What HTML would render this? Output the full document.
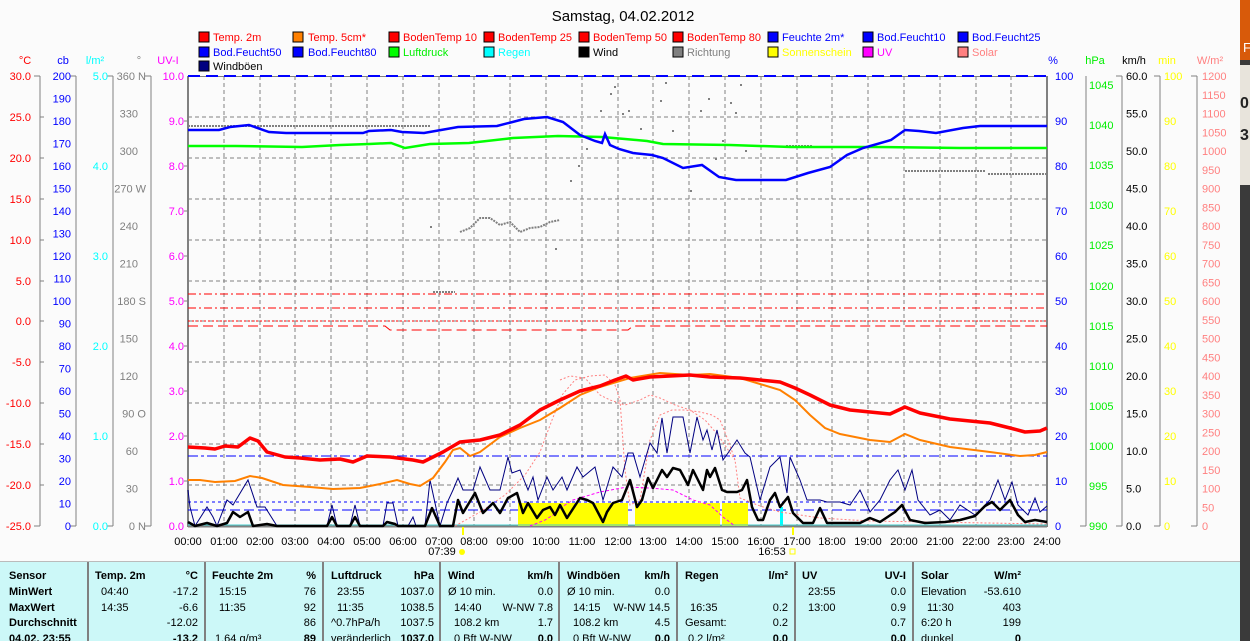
<!DOCTYPE html>
<html><head><meta charset="utf-8"><style>
body{margin:0;background:#fbfbfb;width:1250px;height:641px;overflow:hidden}
svg{display:block;font-family:"Liberation Sans",Arial,sans-serif;font-size:11px}
.b{font-weight:bold}
</style></head><body>
<svg width="1250" height="641" viewBox="0 0 1250 641">
<rect x="0" y="0" width="1250" height="641" fill="#fbfbfb"/>
<!-- right strip -->
<rect x="1240" y="0" width="10" height="641" fill="#3a3a3a"/>
<rect x="1240" y="0" width="10" height="60" fill="#d85a0a"/>
<text x="1243" y="52" fill="#fff" font-size="13">F</text>
<rect x="1240" y="65" width="10" height="120" fill="#e8e4dc"/>
<text x="1240" y="108" fill="#222" font-size="16" font-weight="bold">0</text>
<text x="1240" y="140" fill="#222" font-size="16" font-weight="bold">3</text>
<!-- title -->
<text x="623" y="21" text-anchor="middle" font-size="15" fill="#000">Samstag, 04.02.2012</text>
<!-- legend -->
<g>
<rect x="199" y="32" width="10" height="10" fill="#f00" stroke="#000"/><text x="213" y="41" fill="#f00">Temp. 2m</text>
<rect x="293" y="32" width="10" height="10" fill="#ff8000" stroke="#000"/><text x="308" y="41" fill="#f00">Temp. 5cm*</text>
<rect x="389" y="32" width="10" height="10" fill="#f00" stroke="#000"/><text x="403" y="41" fill="#f00">BodenTemp 10</text>
<rect x="484" y="32" width="10" height="10" fill="#f00" stroke="#000"/><text x="498" y="41" fill="#f00">BodenTemp 25</text>
<rect x="579" y="32" width="10" height="10" fill="#f00" stroke="#000"/><text x="593" y="41" fill="#f00">BodenTemp 50</text>
<rect x="673" y="32" width="10" height="10" fill="#f00" stroke="#000"/><text x="687" y="41" fill="#f00">BodenTemp 80</text>
<rect x="768" y="32" width="10" height="10" fill="#00f" stroke="#000"/><text x="782" y="41" fill="#00f">Feuchte 2m*</text>
<rect x="863" y="32" width="10" height="10" fill="#00f" stroke="#000"/><text x="877" y="41" fill="#00f">Bod.Feucht10</text>
<rect x="958" y="32" width="10" height="10" fill="#00f" stroke="#000"/><text x="972" y="41" fill="#00f">Bod.Feucht25</text>
<rect x="199" y="47" width="10" height="10" fill="#00f" stroke="#000"/><text x="213" y="56" fill="#00f">Bod.Feucht50</text>
<rect x="293" y="47" width="10" height="10" fill="#00f" stroke="#000"/><text x="308" y="56" fill="#00f">Bod.Feucht80</text>
<rect x="389" y="47" width="10" height="10" fill="#0f0" stroke="#000"/><text x="403" y="56" fill="#0e0">Luftdruck</text>
<rect x="484" y="47" width="10" height="10" fill="#0ff" stroke="#000"/><text x="498" y="56" fill="#0ff">Regen</text>
<rect x="579" y="47" width="10" height="10" fill="#000" stroke="#000"/><text x="593" y="56" fill="#000">Wind</text>
<rect x="673" y="47" width="10" height="10" fill="#808080" stroke="#000"/><text x="687" y="56" fill="#808080">Richtung</text>
<rect x="768" y="47" width="10" height="10" fill="#ff0" stroke="#000"/><text x="782" y="56" fill="#ff0">Sonnenschein</text>
<rect x="863" y="47" width="10" height="10" fill="#f0f" stroke="#000"/><text x="877" y="56" fill="#f0f">UV</text>
<rect x="958" y="47" width="10" height="10" fill="#ff8080" stroke="#000"/><text x="972" y="56" fill="#ff8080">Solar</text>
<rect x="199" y="61" width="10" height="10" fill="#000080" stroke="#000"/><text x="213" y="70" fill="#000">Windböen</text>
</g>
<!-- axis units -->
<text x="25" y="64" text-anchor="middle" fill="#f00">°C</text>
<text x="63" y="64" text-anchor="middle" fill="#00f">cb</text>
<text x="95" y="64" text-anchor="middle" fill="#0ff">l/m²</text>
<text x="139" y="64" text-anchor="middle" fill="#808080">°</text>
<text x="168" y="64" text-anchor="middle" fill="#f0f">UV-I</text>
<text x="1053" y="64" text-anchor="middle" fill="#00f">%</text>
<text x="1095" y="64" text-anchor="middle" fill="#0e0">hPa</text>
<text x="1134" y="64" text-anchor="middle" fill="#000">km/h</text>
<text x="1167" y="64" text-anchor="middle" fill="#ff0">min</text>
<text x="1210" y="64" text-anchor="middle" fill="#ff8080">W/m²</text>
<!-- axis lines -->
<g stroke="#808080" stroke-width="1">
<line x1="40" y1="76" x2="40" y2="526"/><line x1="76" y1="76" x2="76" y2="526"/><line x1="113" y1="76" x2="113" y2="526"/><line x1="151" y1="76" x2="151" y2="526"/>
<line x1="1086" y1="76" x2="1086" y2="526"/><line x1="1122" y1="76" x2="1122" y2="526"/><line x1="1160" y1="76" x2="1160" y2="526"/><line x1="1197" y1="76" x2="1197" y2="526"/>
<line x1="34" y1="526" x2="40" y2="526"/><line x1="70" y1="526" x2="76" y2="526"/><line x1="107" y1="526" x2="113" y2="526"/><line x1="145" y1="526" x2="151" y2="526"/>
<line x1="1080" y1="526" x2="1086" y2="526"/><line x1="1116" y1="526" x2="1122" y2="526"/><line x1="1154" y1="526" x2="1160" y2="526"/><line x1="1191" y1="526" x2="1197" y2="526"/>
<line x1="1116" y1="76" x2="1122" y2="76"/><line x1="1154" y1="76" x2="1160" y2="76"/><line x1="1191" y1="76" x2="1197" y2="76"/><line x1="34" y1="76" x2="40" y2="76"/><line x1="70" y1="76" x2="76" y2="76"/><line x1="107" y1="76" x2="113" y2="76"/><line x1="145" y1="76" x2="151" y2="76"/>
</g>
<!-- °C labels -->
<g fill="#f00" text-anchor="end">
<text x="31" y="80">30.0</text><text x="31" y="121">25.0</text><text x="31" y="162">20.0</text><text x="31" y="203">15.0</text><text x="31" y="244">10.0</text><text x="31" y="285">5.0</text><text x="31" y="325">0.0</text><text x="31" y="366">-5.0</text><text x="31" y="407">-10.0</text><text x="31" y="448">-15.0</text><text x="31" y="489">-20.0</text><text x="31" y="530">-25.0</text>
</g>
<g stroke="#808080"><line x1="40" y1="117" x2="44" y2="117"/><line x1="40" y1="158" x2="44" y2="158"/><line x1="40" y1="199" x2="44" y2="199"/><line x1="40" y1="240" x2="44" y2="240"/><line x1="40" y1="281" x2="44" y2="281"/><line x1="40" y1="321" x2="44" y2="321"/><line x1="40" y1="362" x2="44" y2="362"/><line x1="40" y1="403" x2="44" y2="403"/><line x1="40" y1="444" x2="44" y2="444"/><line x1="40" y1="485" x2="44" y2="485"/></g>
<!-- cb labels -->
<g fill="#00f" text-anchor="end">
<text x="71" y="80">200</text><text x="71" y="102.5">190</text><text x="71" y="125">180</text><text x="71" y="147.5">170</text><text x="71" y="170">160</text><text x="71" y="192.5">150</text><text x="71" y="215">140</text><text x="71" y="237.5">130</text><text x="71" y="260">120</text><text x="71" y="282.5">110</text><text x="71" y="305">100</text><text x="71" y="327.5">90</text><text x="71" y="350">80</text><text x="71" y="372.5">70</text><text x="71" y="395">60</text><text x="71" y="417.5">50</text><text x="71" y="440">40</text><text x="71" y="462.5">30</text><text x="71" y="485">20</text><text x="71" y="507.5">10</text><text x="71" y="530">0</text>
</g>
<!-- l/m2 -->
<g fill="#0ff" text-anchor="end">
<text x="108" y="80">5.0</text><text x="108" y="170">4.0</text><text x="108" y="260">3.0</text><text x="108" y="350">2.0</text><text x="108" y="440">1.0</text><text x="108" y="530">0.0</text>
</g>
<!-- degrees -->
<g fill="#808080" text-anchor="end">
<text x="146" y="80">360 N</text><text x="138" y="117.5">330</text><text x="138" y="155">300</text><text x="146" y="192.5">270 W</text><text x="138" y="230">240</text><text x="138" y="267.5">210</text><text x="146" y="305">180 S</text><text x="138" y="342.5">150</text><text x="138" y="380">120</text><text x="146" y="417.5">90  O</text><text x="138" y="455">60</text><text x="138" y="492.5">30</text><text x="146" y="530">0   N</text>
</g>
<!-- UV-I -->
<g fill="#f0f" text-anchor="end">
<text x="184" y="80">10.0</text><text x="184" y="125">9.0</text><text x="184" y="170">8.0</text><text x="184" y="215">7.0</text><text x="184" y="260">6.0</text><text x="184" y="305">5.0</text><text x="184" y="350">4.0</text><text x="184" y="395">3.0</text><text x="184" y="440">2.0</text><text x="184" y="485">1.0</text><text x="184" y="530">0.0</text>
</g>
<!-- % -->
<g fill="#00f">
<text x="1055" y="80">100</text><text x="1055" y="125">90</text><text x="1055" y="170">80</text><text x="1055" y="215">70</text><text x="1055" y="260">60</text><text x="1055" y="305">50</text><text x="1055" y="350">40</text><text x="1055" y="395">30</text><text x="1055" y="440">20</text><text x="1055" y="485">10</text><text x="1055" y="530">0</text>
</g>
<!-- hPa -->
<g fill="#0e0">
<text x="1089" y="89">1045</text><text x="1089" y="129">1040</text><text x="1089" y="169">1035</text><text x="1089" y="209">1030</text><text x="1089" y="249">1025</text><text x="1089" y="290">1020</text><text x="1089" y="330">1015</text><text x="1089" y="370">1010</text><text x="1089" y="410">1005</text><text x="1089" y="450">1000</text><text x="1089" y="490">995</text><text x="1089" y="530">990</text>
</g>
<!-- km/h -->
<g fill="#000">
<text x="1126" y="80">60.0</text><text x="1126" y="117.5">55.0</text><text x="1126" y="155">50.0</text><text x="1126" y="192.5">45.0</text><text x="1126" y="230">40.0</text><text x="1126" y="267.5">35.0</text><text x="1126" y="305">30.0</text><text x="1126" y="342.5">25.0</text><text x="1126" y="380">20.0</text><text x="1126" y="417.5">15.0</text><text x="1126" y="455">10.0</text><text x="1126" y="492.5">5.0</text><text x="1126" y="530">0.0</text>
</g>
<!-- min -->
<g fill="#ff0">
<text x="1164" y="80">100</text><text x="1164" y="125">90</text><text x="1164" y="170">80</text><text x="1164" y="215">70</text><text x="1164" y="260">60</text><text x="1164" y="305">50</text><text x="1164" y="350">40</text><text x="1164" y="395">30</text><text x="1164" y="440">20</text><text x="1164" y="485">10</text><text x="1164" y="530">0</text>
</g>
<!-- W/m2 -->
<g fill="#ff8080">
<text x="1202" y="80">1200</text><text x="1202" y="98.8">1150</text><text x="1202" y="117.5">1100</text><text x="1202" y="136.3">1050</text><text x="1202" y="155">1000</text><text x="1202" y="173.8">950</text><text x="1202" y="192.5">900</text><text x="1202" y="211.3">850</text><text x="1202" y="230">800</text><text x="1202" y="248.8">750</text><text x="1202" y="267.5">700</text><text x="1202" y="286.3">650</text><text x="1202" y="305">600</text><text x="1202" y="323.8">550</text><text x="1202" y="342.5">500</text><text x="1202" y="361.3">450</text><text x="1202" y="380">400</text><text x="1202" y="398.8">350</text><text x="1202" y="417.5">300</text><text x="1202" y="436.3">250</text><text x="1202" y="455">200</text><text x="1202" y="473.8">150</text><text x="1202" y="492.5">100</text><text x="1202" y="511.3">50</text><text x="1202" y="530">0</text>
</g>
<!-- plot frame & grid -->
<g stroke="#808080" stroke-width="1" stroke-dasharray="4,3">
<line x1="224" y1="76" x2="224" y2="526"/><line x1="260" y1="76" x2="260" y2="526"/><line x1="295" y1="76" x2="295" y2="526"/><line x1="331" y1="76" x2="331" y2="526"/><line x1="367" y1="76" x2="367" y2="526"/><line x1="403" y1="76" x2="403" y2="526"/><line x1="439" y1="76" x2="439" y2="526"/><line x1="474" y1="76" x2="474" y2="526"/><line x1="510" y1="76" x2="510" y2="526"/><line x1="546" y1="76" x2="546" y2="526"/><line x1="582" y1="76" x2="582" y2="526"/><line x1="618" y1="76" x2="618" y2="526"/><line x1="653" y1="76" x2="653" y2="526"/><line x1="689" y1="76" x2="689" y2="526"/><line x1="725" y1="76" x2="725" y2="526"/><line x1="761" y1="76" x2="761" y2="526"/><line x1="797" y1="76" x2="797" y2="526"/><line x1="832" y1="76" x2="832" y2="526"/><line x1="868" y1="76" x2="868" y2="526"/><line x1="904" y1="76" x2="904" y2="526"/><line x1="940" y1="76" x2="940" y2="526"/><line x1="976" y1="76" x2="976" y2="526"/><line x1="1011" y1="76" x2="1011" y2="526"/>
<line x1="188" y1="117" x2="1047" y2="117"/><line x1="188" y1="158" x2="1047" y2="158"/><line x1="188" y1="199" x2="1047" y2="199"/><line x1="188" y1="240" x2="1047" y2="240"/><line x1="188" y1="281" x2="1047" y2="281"/><line x1="188" y1="321" x2="1047" y2="321"/><line x1="188" y1="362" x2="1047" y2="362"/><line x1="188" y1="403" x2="1047" y2="403"/><line x1="188" y1="444" x2="1047" y2="444"/><line x1="188" y1="485" x2="1047" y2="485"/>
</g>
<g stroke="#808080" stroke-width="2"><line x1="188" y1="76" x2="188" y2="527"/><line x1="1047" y1="76" x2="1047" y2="527"/><line x1="188" y1="526.5" x2="1047" y2="526.5"/></g>
<line x1="188" y1="76.5" x2="1047" y2="76.5" stroke="#808080"/>
<!-- axis ticks small -->
<g stroke="#808080"><line x1="184" y1="121" x2="188" y2="121"/><line x1="184" y1="166" x2="188" y2="166"/><line x1="184" y1="211" x2="188" y2="211"/><line x1="184" y1="256" x2="188" y2="256"/><line x1="184" y1="301" x2="188" y2="301"/><line x1="184" y1="346" x2="188" y2="346"/><line x1="184" y1="391" x2="188" y2="391"/><line x1="184" y1="436" x2="188" y2="436"/><line x1="184" y1="481" x2="188" y2="481"/></g>
<!-- blue dashed top -->
<line x1="188" y1="76" x2="1047" y2="76" stroke="#00f" stroke-width="2" stroke-dasharray="12,6"/>
<!-- red dashed soil temps -->
<g stroke="#f00" stroke-width="1">
<line x1="188" y1="294" x2="1047" y2="294" stroke-dasharray="8,3,2,3"/>
<line x1="188" y1="308" x2="1047" y2="308" stroke-dasharray="8,3,2,3"/>
<line x1="188" y1="321" x2="1047" y2="321" stroke-dasharray="2,2"/>
<polyline fill="none" stroke-dasharray="10,5" points="188,326 385,326 390,330 628,330 633,326 1047,326"/>
</g>
<!-- blue dashed lower -->
<line x1="188" y1="456" x2="1047" y2="456" stroke="#00f" stroke-dasharray="10,3,3,3"/>
<line x1="188" y1="502" x2="1047" y2="502" stroke="#00f" stroke-dasharray="3,3"/>
<line x1="188" y1="510" x2="1047" y2="510" stroke="#00f" stroke-dasharray="10,4"/>
<!-- sunshine -->
<g fill="#ff0"><rect x="518" y="503" width="110" height="23"/><rect x="635" y="503" width="85" height="23"/><rect x="722" y="503" width="26" height="23"/></g>
<rect x="780" y="507" width="3" height="19" fill="#0ff"/>
<line x1="188" y1="525" x2="1047" y2="525" stroke="#4cc" stroke-width="1"/>
<!-- direction gray dots -->
<g stroke="#808080" stroke-width="2" stroke-dasharray="2,1" fill="none">
<line x1="188" y1="126" x2="430" y2="126"/>
<line x1="905" y1="171" x2="986" y2="171"/><line x1="988" y1="174" x2="1047" y2="174"/>
<line x1="786" y1="146" x2="813" y2="146"/><line x1="819" y1="147" x2="869" y2="147"/>
<line x1="433" y1="292" x2="455" y2="292"/>
<polyline points="460,232 470,228 480,218 490,218 500,225 510,222 520,232 530,228 540,227 550,222 560,220"/>
</g>
<g fill="#808080">
<rect x="430" y="226" width="2" height="2"/><rect x="555" y="248" width="2" height="2"/><rect x="570" y="180" width="2" height="2"/><rect x="578" y="165" width="2" height="2"/><rect x="586" y="148" width="2" height="2"/><rect x="600" y="110" width="2" height="2"/><rect x="610" y="93" width="2" height="2"/><rect x="614" y="86" width="2" height="2"/><rect x="622" y="113" width="2" height="2"/><rect x="628" y="110" width="2" height="2"/><rect x="640" y="128" width="2" height="2"/><rect x="660" y="100" width="2" height="2"/><rect x="665" y="82" width="2" height="2"/><rect x="672" y="130" width="2" height="2"/><rect x="690" y="190" width="2" height="2"/><rect x="700" y="110" width="2" height="2"/><rect x="708" y="98" width="2" height="2"/><rect x="715" y="158" width="2" height="2"/><rect x="722" y="140" width="2" height="2"/><rect x="730" y="102" width="2" height="2"/><rect x="735" y="112" width="2" height="2"/><rect x="740" y="84" width="2" height="2"/><rect x="745" y="150" width="2" height="2"/><rect x="760" y="145" width="2" height="2"/>
</g>
<!-- solar dotted -->
<polyline fill="none" stroke="#ff8080" stroke-width="1" stroke-dasharray="2,2" points="455,526 480,512 505,495 525,475 540,452 552,420 562,395 575,380 590,376 605,375 615,385 620,400 625,470 630,505 640,500 650,440 660,415 672,410 685,410 700,412 712,415 720,420 728,440 735,460 740,498 760,506 780,512 820,518 870,521 1047,524"/>
<polyline fill="none" stroke="#ff8080" stroke-width="1" stroke-dasharray="2,2" points="560,380 570,376 585,378 600,395 610,400 625,405 640,400 650,395 660,398 675,405 690,410 705,420 718,435 735,460"/>
<!-- UV magenta dashed -->
<polyline fill="none" stroke="#f0f" stroke-width="1" stroke-dasharray="3,2" points="530,526 545,520 553,515 565,505 573,500 600,492 627,487 650,488 673,490 693,500 710,505 723,517 735,526"/>
<!-- Windboeen -->
<polyline fill="none" stroke="#000080" stroke-width="1" points="188,490 190,507 195,526 207,507 213,517 217,526 227,500 233,505 248,480 257,507 265,507 277,526 327,526 332,505 337,526 350,526 355,505 360,526 383,526 387,503 393,503 398,526 408,526 413,517 416,526 425,526 430,480 440,526 447,503 453,490 458,478 463,490 473,490 480,467 490,490 500,490 508,457 512,473 520,470 528,490 533,477 538,500 547,477 553,490 562,477 567,490 577,467 583,477 595,467 603,500 613,467 622,477 628,453 633,453 640,477 650,443 657,453 662,418 667,453 673,417 683,417 690,453 697,417 703,440 707,430 712,450 717,430 723,460 728,453 737,440 745,453 750,457 760,500 770,467 780,457 787,493 790,457 800,480 807,500 820,500 827,502 840,502 850,505 860,490 870,512 880,500 890,480 898,470 905,490 912,470 918,500 930,515 940,510 950,520 960,505 975,515 990,500 998,480 1005,500 1012,482 1018,505 1028,515 1035,498 1040,512 1047,506"/>
<!-- Wind black -->
<polyline fill="none" stroke="#000" stroke-width="2.5" stroke-linejoin="round" points="188,522 195,526 207,523 217,526 227,523 233,512 240,517 248,512 253,526 267,524 277,526 327,526 332,517 337,526 350,526 355,517 360,526 383,526 387,522 395,524 398,526 425,526 432,508 440,526 453,526 458,500 463,513 475,493 483,513 493,503 500,513 508,498 517,493 523,513 528,503 537,518 543,510 550,507 555,515 560,505 567,518 580,498 587,500 593,503 603,522 607,512 613,503 622,500 630,480 637,507 642,500 648,478 653,488 662,470 667,477 673,468 680,470 688,485 693,470 703,490 707,470 710,477 715,468 722,490 727,492 737,492 742,490 747,480 752,507 758,520 763,520 770,500 775,493 780,507 788,497 793,513 803,523 813,523 820,508 827,523 860,523 870,518 880,522 895,512 902,505 910,520 925,523 945,522 960,520 975,516 985,506 992,502 1000,510 1010,500 1018,515 1025,522 1035,520 1047,522"/>
<!-- Temp 5cm orange -->
<polyline fill="none" stroke="#ff8000" stroke-width="2" points="188,480 200,480 215,482 235,481 250,476 262,478 283,485 310,487 333,489 360,488 380,484 397,480 410,484 420,486 433,478 445,462 453,450 460,448 470,456 480,452 500,437 520,428 540,420 560,408 580,395 600,387 630,378 660,373 690,375 710,374 740,378 760,384 780,390 795,400 810,415 825,428 840,434 870,440 890,442 905,434 920,440 950,447 990,452 1020,456 1035,455 1047,452"/>
<!-- Temp 2m red -->
<polyline fill="none" stroke="#f00" stroke-width="3.5" stroke-linejoin="round" points="188,447 205,448 215,449 225,446 238,447 250,438 258,441 267,452 285,457 300,458 320,460 340,459 353,462 367,456 390,457 413,460 423,462 443,452 460,442 480,440 500,435 520,425 540,410 560,400 580,391 600,386 615,380 626,376 633,380 650,377 670,376 690,375 710,377 740,378 760,380 780,382 795,388 810,395 830,405 850,410 870,412 890,414 905,407 920,413 950,419 990,423 1010,428 1025,432 1040,431 1047,428"/>
<!-- Luftdruck green -->
<polyline fill="none" stroke="#0f0" stroke-width="2.5" points="188,146 236,146 302,147 340,145 369,144 391,143 405,148 430,144 469,143 513,138 558,136 602,137 625,139 647,141 663,144 730,145 791,147 874,147 960,148 1047,148"/>
<!-- Feuchte blue -->
<polyline fill="none" stroke="#00f" stroke-width="2.5" points="188,130 219,130 230,127 249,125 269,132 286,133 363,133 369,131 391,130 402,132 424,133 441,130 458,127 497,126 524,119 547,117 563,122 580,135 595,141 602,143 605,134 610,145 619,149 633,153 652,155 663,158 683,168 702,165 719,177 736,180 786,180 808,173 830,167 847,155 863,148 891,140 905,130 919,131 936,133 963,128 980,126 1019,126 1047,126"/>
<!-- time labels -->
<g fill="#000" text-anchor="middle">
<text x="188" y="545">00:00</text><text x="224" y="545">01:00</text><text x="260" y="545">02:00</text><text x="295" y="545">03:00</text><text x="331" y="545">04:00</text><text x="367" y="545">05:00</text><text x="403" y="545">06:00</text><text x="439" y="545">07:00</text><text x="474" y="545">08:00</text><text x="510" y="545">09:00</text><text x="546" y="545">10:00</text><text x="582" y="545">11:00</text><text x="618" y="545">12:00</text><text x="653" y="545">13:00</text><text x="689" y="545">14:00</text><text x="725" y="545">15:00</text><text x="761" y="545">16:00</text><text x="797" y="545">17:00</text><text x="832" y="545">18:00</text><text x="868" y="545">19:00</text><text x="904" y="545">20:00</text><text x="940" y="545">21:00</text><text x="976" y="545">22:00</text><text x="1011" y="545">23:00</text><text x="1047" y="545">24:00</text>
<text x="442" y="555">07:39</text><text x="772" y="555">16:53</text>
</g>
<rect x="462" y="527" width="2" height="8" fill="#ff0"/><circle cx="462" cy="552" r="3" fill="#ff0"/>
<rect x="792" y="527" width="2" height="8" fill="#ff0"/><rect x="790" y="549" width="5" height="5" fill="none" stroke="#ff0"/>
<!-- table -->
<rect x="0" y="561" width="1240" height="80" fill="#ccf8f8"/>
<line x1="0" y1="561.5" x2="1240" y2="561.5" stroke="#bbb"/>
<g stroke="#808080" stroke-width="2"><line x1="88" y1="562" x2="88" y2="641"/><line x1="205" y1="562" x2="205" y2="641"/><line x1="323" y1="562" x2="323" y2="641"/><line x1="440" y1="562" x2="440" y2="641"/><line x1="559" y1="562" x2="559" y2="641"/><line x1="677" y1="562" x2="677" y2="641"/><line x1="795" y1="562" x2="795" y2="641"/><line x1="913" y1="562" x2="913" y2="641"/></g>
<g class="b" fill="#000">
<text x="9" y="579">Sensor</text><text x="9" y="595">MinWert</text><text x="9" y="611">MaxWert</text><text x="9" y="626">Durchschnitt</text><text x="9" y="642">04.02. 23:55</text>
<text x="95" y="579">Temp. 2m</text><text x="198" y="579" text-anchor="end">°C</text>
<text x="212" y="579">Feuchte 2m</text><text x="316" y="579" text-anchor="end">%</text>
<text x="331" y="579">Luftdruck</text><text x="434" y="579" text-anchor="end">hPa</text>
<text x="448" y="579">Wind</text><text x="553" y="579" text-anchor="end">km/h</text>
<text x="567" y="579">Windböen</text><text x="670" y="579" text-anchor="end">km/h</text>
<text x="685" y="579">Regen</text><text x="788" y="579" text-anchor="end">l/m²</text>
<text x="802" y="579">UV</text><text x="906" y="579" text-anchor="end">UV-I</text>
<text x="921" y="579">Solar</text><text x="1021" y="579" text-anchor="end">W/m²</text>
<text x="198" y="642" text-anchor="end">-13.2</text><text x="316" y="642" text-anchor="end">89</text><text x="434" y="642" text-anchor="end">1037.0</text><text x="553" y="642" text-anchor="end">0.0</text><text x="670" y="642" text-anchor="end">0.0</text><text x="788" y="642" text-anchor="end">0.0</text><text x="906" y="642" text-anchor="end">0.0</text><text x="1021" y="642" text-anchor="end">0</text>
</g>
<g fill="#000">
<text x="101" y="595">04:40</text><text x="198" y="595" text-anchor="end">-17.2</text>
<text x="101" y="611">14:35</text><text x="198" y="611" text-anchor="end">-6.6</text>
<text x="198" y="626" text-anchor="end">-12.02</text>
<text x="219" y="595">15:15</text><text x="316" y="595" text-anchor="end">76</text>
<text x="219" y="611">11:35</text><text x="316" y="611" text-anchor="end">92</text>
<text x="316" y="626" text-anchor="end">86</text><text x="215" y="642">1.64 g/m³</text>
<text x="337" y="595">23:55</text><text x="434" y="595" text-anchor="end">1037.0</text>
<text x="337" y="611">11:35</text><text x="434" y="611" text-anchor="end">1038.5</text>
<text x="331" y="626">^0.7hPa/h</text><text x="434" y="626" text-anchor="end">1037.5</text>
<text x="331" y="642">veränderlich</text>
<text x="448" y="595">Ø 10 min.</text><text x="553" y="595" text-anchor="end">0.0</text>
<text x="454" y="611">14:40</text><text x="553" y="611" text-anchor="end">W-NW 7.8</text>
<text x="454" y="626">108.2 km</text><text x="553" y="626" text-anchor="end">1.7</text>
<text x="454" y="642">0 Bft W-NW</text>
<text x="567" y="595">Ø 10 min.</text><text x="670" y="595" text-anchor="end">0.0</text>
<text x="573" y="611">14:15</text><text x="670" y="611" text-anchor="end">W-NW 14.5</text>
<text x="573" y="626">108.2 km</text><text x="670" y="626" text-anchor="end">4.5</text>
<text x="573" y="642">0 Bft W-NW</text>
<text x="690" y="611">16:35</text><text x="788" y="611" text-anchor="end">0.2</text>
<text x="685" y="626">Gesamt:</text><text x="788" y="626" text-anchor="end">0.2</text>
<text x="688" y="642">0.2 l/m²</text>
<text x="808" y="595">23:55</text><text x="906" y="595" text-anchor="end">0.0</text>
<text x="808" y="611">13:00</text><text x="906" y="611" text-anchor="end">0.9</text>
<text x="906" y="626" text-anchor="end">0.7</text>
<text x="921" y="595">Elevation</text><text x="1021" y="595" text-anchor="end">-53.610</text>
<text x="927" y="611">11:30</text><text x="1021" y="611" text-anchor="end">403</text>
<text x="921" y="626">6:20 h</text><text x="1021" y="626" text-anchor="end">199</text>
<text x="921" y="642">dunkel</text>
</g>
</svg>
</body></html>
